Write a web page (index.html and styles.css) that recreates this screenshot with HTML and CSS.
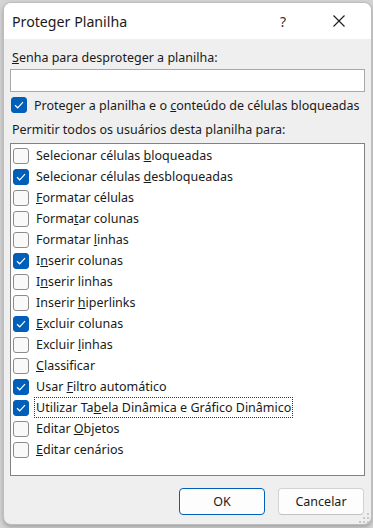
FILE: index.html
```html
<!DOCTYPE html>
<html lang="pt-BR">
<head>
    <meta charset="UTF-8">
    <title>Proteger Planilha</title>
    <link rel="stylesheet" href="styles.css">
</head>
<body>
    <div class="dialog">
        <div class="titlebar">
            <span class="title">Proteger Planilha</span>
            <span class="help">?</span>
            <span class="close">
                <svg width="12" height="12" viewBox="0 0 12 12"><path d="M0.5 0.5 L11.5 11.5 M11.5 0.5 L0.5 11.5" stroke="#1a1a1a" stroke-width="1.1" fill="none"/></svg>
            </span>
        </div>

        <div class="content">
            <div class="label"><u>S</u>enha para desproteger a planilha:</div>
            <div class="input"></div>

            <div class="check-row">
                <span class="box checked"><svg width="10" height="8" viewBox="0 0 10 8"><path d="M1 4.2 L3.7 6.8 L9 1.2" stroke="#fff" stroke-width="1.2" fill="none"/></svg></span>
                <span>Proteger a planilha e o <u>c</u>onteúdo de células bloqueadas</span>
            </div>

            <div class="label permit">Permitir todos os usuários desta planilha para:</div>

            <div class="listbox" id="list"></div>

            <div class="buttons">
                <button class="btn default">OK</button>
                <button class="btn">Cancelar</button>
            </div>
        </div>

        <svg class="grip" width="10" height="10" viewBox="0 0 10 10">
            <rect x="8" y="0" width="2" height="2" fill="#c8c8c8"/>
            <rect x="4" y="4" width="2" height="2" fill="#c8c8c8"/>
            <rect x="8" y="4" width="2" height="2" fill="#c8c8c8"/>
            <rect x="0" y="8" width="2" height="2" fill="#c8c8c8"/>
            <rect x="4" y="8" width="2" height="2" fill="#c8c8c8"/>
            <rect x="8" y="8" width="2" height="2" fill="#c8c8c8"/>
        </svg>
    </div>

    <script>
        // [texto, letra sublinhada (índice), marcado]
        const items = [
            ["Selecionar células bloqueadas", 19, false],
            ["Selecionar células desbloqueadas", 19, true],
            ["Formatar células", 0, false],
            ["Formatar colunas", 5, false],
            ["Formatar linhas", 9, false],
            ["Inserir colunas", 1, true],
            ["Inserir linhas", 1, false],
            ["Inserir hiperlinks", 8, false],
            ["Excluir colunas", 0, true],
            ["Excluir linhas", 8, false],
            ["Classificar", 0, false],
            ["Usar Filtro automático", 5, true],
            ["Utilizar Tabela Dinâmica e Gráfico Dinâmico", 11, true],
            ["Editar Objetos", 7, false],
            ["Editar cenários", 0, false]
        ];

        const check = '<svg width="10" height="8" viewBox="0 0 10 8"><path d="M1 4.2 L3.7 6.8 L9 1.2" stroke="#fff" stroke-width="1.2" fill="none"/></svg>';

        document.getElementById("list").innerHTML = items.map(([text, k, on], i) => `
            <div class="check-row item">
                <span class="box ${on ? "checked" : ""}">${on ? check : ""}</span>
                <span class="text ${i === 12 ? "focus" : ""}">${text.slice(0, k)}<u>${text[k]}</u>${text.slice(k + 1)}</span>
            </div>
        `).join("");
    </script>
</body>
</html>
```

FILE: styles.css
```css
* { margin: 0; padding: 0; box-sizing: border-box; }

body {
    font-family: "Noto Sans", "DejaVu Sans", sans-serif;
    font-size: 12.5px;
    color: #1a1a1a;
    background: #d4d4d4;
    width: 373px;
    height: 528px;
    overflow: hidden;
}

.dialog {
    position: relative;
    margin: 2px 0 0 3px;
    width: 369px;
    height: 523px;
    background: #efefef;
    border-radius: 8px;
    border: 1px solid #bdbdbd;
    overflow: hidden;
    box-shadow: 0 2px 4px rgba(0, 0, 0, 0.25);
}

.titlebar {
    height: 36px;
    background: #fff;
    display: flex;
    align-items: center;
    padding-left: 8px;
}

.title {
    font-size: 14.2px;
    flex: 1;
    padding-top: 1px;
}

.help {
    font-size: 14px;
    width: 56px;
    text-align: center;
    color: #333;
}

.close {
    width: 56px;
    display: flex;
    justify-content: center;
    margin-right: 4px;
}

.content {
    padding: 9px 7px 0 6px;
}

.label {
    height: 20px;
    line-height: 20px;
    padding-left: 2px;
}

.input {
    margin-top: 1px;
    height: 23px;
    width: 355px;
    background: #fff;
    border: 1px solid #a8a8a8;
}

.check-row {
    display: flex;
    align-items: center;
    height: 22px;
    margin-top: 2px;
}

.box {
    width: 16px;
    height: 16px;
    border-radius: 3px;
    border: 1px solid #8c8c8c;
    background: #f9f9f9;
    margin: 0 7px 0 1px;
    display: flex;
    align-items: center;
    justify-content: center;
    flex-shrink: 0;
}

.box.checked {
    background: #005fb8;
    border-color: #005fb8;
}

.permit {
    margin-top: 4px;
}

.listbox {
    margin-top: 3px;
    width: 355px;
    height: 333px;
    background: #fff;
    border: 1px solid #828282;
    padding: 1px 0 0 1px;
}

.item {
    height: 21px;
    margin-top: 0;
}

.item .box {
    margin-right: 5px;
}

.item .text {
    height: 21px;
    line-height: 19px;
    padding: 0 1px;
    border: 1px dotted transparent;
}

.item .text.focus {
    border-color: #333;
}

.buttons {
    display: flex;
    justify-content: flex-end;
    gap: 13px;
    margin-top: 12px;
    padding-right: 0;
}

.btn {
    font-family: inherit;
    font-size: 12.5px;
    color: #1a1a1a;
    width: 86px;
    height: 27px;
    background: #fdfdfd;
    border: 1px solid #d3d3d3;
    border-bottom-color: #c2c2c2;
    border-radius: 4px;
}

.btn.default {
    border: 1px solid #005fb8;
    box-shadow: inset 0 0 0 1px #fff;
}

.grip {
    position: absolute;
    right: 2px;
    bottom: 1px;
}
```
